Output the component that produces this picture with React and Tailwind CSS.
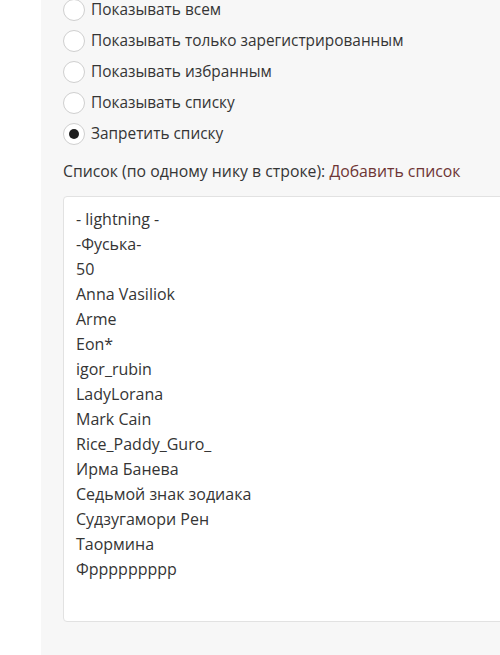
import React from "react";

const options = [
  { label: "Показывать всем", checked: false },
  { label: "Показывать только зарегистрированным", checked: false },
  { label: "Показывать избранным", checked: false },
  { label: "Показывать списку", checked: false },
  { label: "Запретить списку", checked: true },
];

const names = [
  "- lightning -",
  "-Фуська-",
  "50",
  "Anna Vasiliok",
  "Arme",
  "Eon*",
  "igor_rubin",
  "LadyLorana",
  "Mark Cain",
  "Rice_Paddy_Guro_",
  "Ирма Банева",
  "Седьмой знак зодиака",
  "Судзугамори Рен",
  "Таормина",
  "Фррррррррр",
];

export default function App() {
  return (
    <div
      className="flex w-[500px] h-[655px] bg-white overflow-hidden text-[#353535] text-[16px]"
      style={{ fontFamily: '"Open Sans", "Noto Sans", sans-serif' }}
    >
      <div className="w-[41px] shrink-0 bg-white" />
      <div className="flex-1 bg-[#f7f7f7] pl-[22px] overflow-hidden">
        <div className="mt-[-6px] flex flex-col">
          {options.map((o) => (
            <div key={o.label} className="flex items-center h-[31px] whitespace-nowrap">
              <span className="w-[22px] h-[22px] rounded-full border border-[#cfcfcf] bg-white flex items-center justify-center shrink-0">
                {o.checked && <span className="w-[10px] h-[10px] rounded-full bg-[#1e1e1e]" />}
              </span>
              <span className="ml-[6px] leading-[20px] text-[15.4px]">{o.label}</span>
            </div>
          ))}
        </div>
        <div className="mt-[7px] h-[31px] flex items-center whitespace-nowrap text-[15.8px]">
          <span>
            Список (по одному нику в строке):{" "}
            <span className="text-[#6e3535]">Добавить список</span>
          </span>
        </div>
        <div className="mt-[9px] w-[470px] h-[426px] bg-white border border-[#e2e2e2] rounded-[4px] pl-[12px] pt-[10px]">
          {names.map((n) => (
            <div key={n} className="leading-[25px] whitespace-nowrap">{n}</div>
          ))}
        </div>
      </div>
    </div>
  );
}
